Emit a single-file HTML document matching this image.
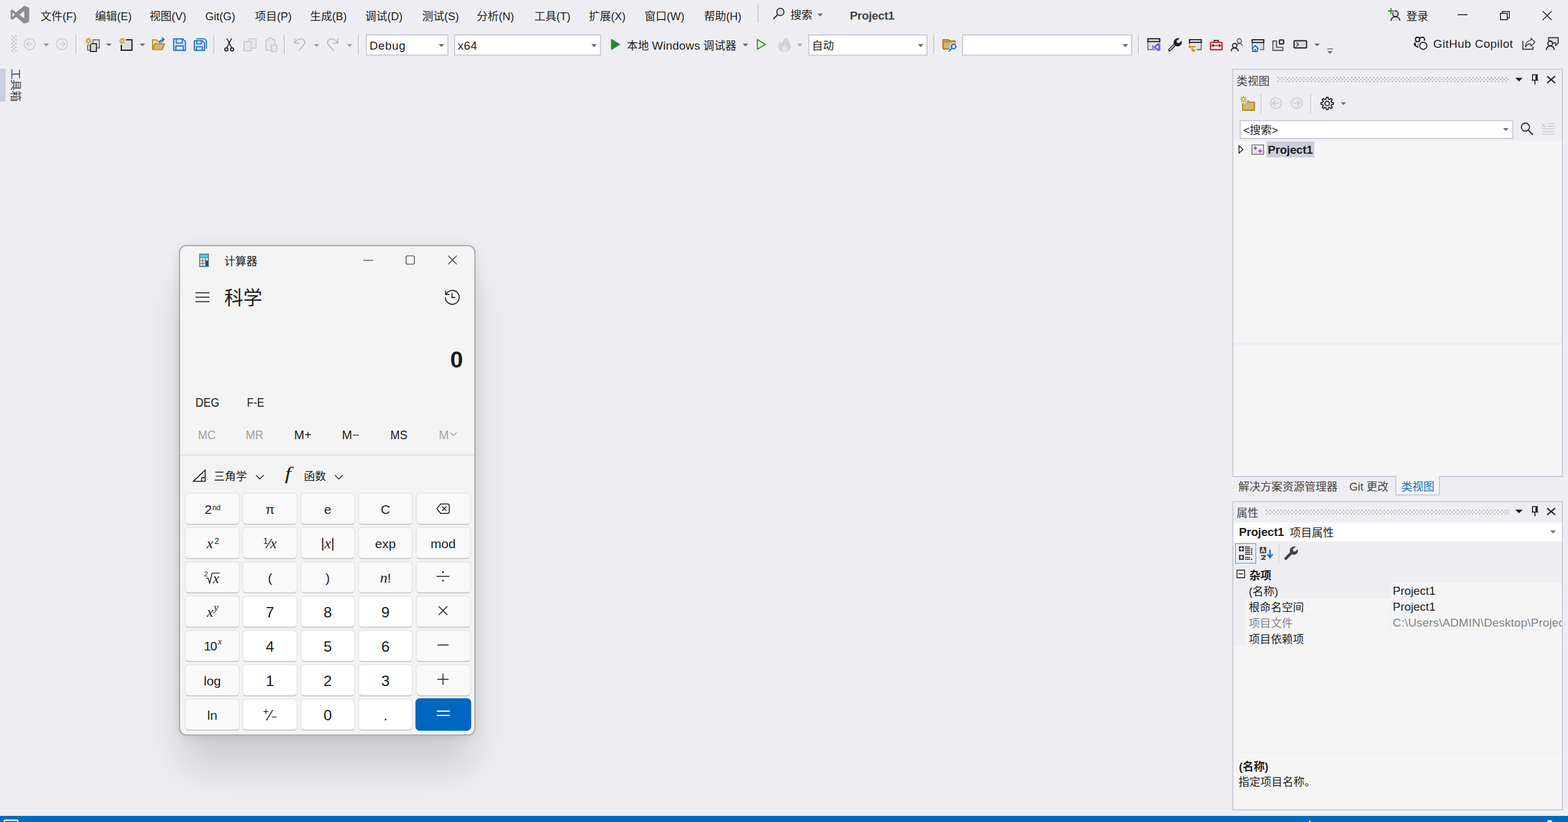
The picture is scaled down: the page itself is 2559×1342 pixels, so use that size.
<!DOCTYPE html>
<html lang="zh-CN">
<head>
<meta charset="utf-8">
<title>Project1 - Microsoft Visual Studio</title>
<style>
html,body{margin:0;padding:0}
body{width:2559px;height:1342px;overflow:hidden;position:relative;background:#EEEEF2;color:#1E1E1E;font-family:"Liberation Sans","Noto Sans CJK SC",sans-serif;font-size:18px}
.a{position:absolute}
.t{position:absolute;white-space:nowrap;line-height:24px;height:24px}
.b{font-weight:bold}
svg{position:absolute;overflow:visible}
/* ---------- VS panels ---------- */
.panel{position:absolute;box-sizing:border-box;border:2px solid #CCCEDB;background:#EEEEF2}
.grip{position:absolute;height:8px;background-image:radial-gradient(circle at 1px 1px,#8E8E93 0.45px,transparent 1.2px),radial-gradient(circle at 4px 4px,#8E8E93 0.45px,transparent 1.2px);background-size:6px 6px}
.combo{position:absolute;box-sizing:border-box;border:2px solid #CCCEDB;background:#fff}
.sep{position:absolute;width:2px;background:#CCCEDB;box-shadow:2px 0 0 #F6F6F8}
/* ---------- Calculator ---------- */
#calc{position:absolute;left:292px;top:400px;width:484px;height:801px;box-sizing:border-box;border:2px solid #ACACAC;border-radius:12px;background:#F3F3F3;box-shadow:0 56px 68px -5px rgba(0,0,0,.145),0 1px 20px -4px rgba(0,0,0,.165);color:#1B1B1B}
#keys{position:absolute;left:301.2px;top:804px;display:grid;grid-template-columns:repeat(5,90.6px);grid-auto-rows:53px;column-gap:3.6px;row-gap:3px}
#keys div{box-sizing:border-box;border:2px solid #E9E9E9;border-bottom-color:#CECECE;border-radius:7px;background:#F9F9F9;display:flex;align-items:center;justify-content:center;font-size:21px;color:#1B1B1B;position:relative;padding-top:2px}
#keys div>svg{position:relative!important;top:-2.6px}
#keys div.n{background:#FFFFFF;font-size:24.5px}
#keys div.eq{background:#0067C0;border-color:#0067C0;color:#fff}
#keys i{font-family:"Liberation Serif",serif;font-style:italic;font-size:24px}
</style>
</head>
<body>

<!-- ======= STATUS BAR ======= -->
<div class="a" style="left:0;top:1332px;width:2559px;height:10px;background:#006CBE"></div>
<div class="a" style="left:6px;top:1338px;width:24px;height:10px;box-sizing:border-box;border:2px solid #fff;border-radius:2px;background:#1A7AC4"></div>
<div class="a" style="left:2136px;top:1340px;width:3px;height:2px;background:#fff;border-radius:1px 1px 0 0"></div>
<div class="a" style="left:2525px;top:1339px;width:8px;height:3px;background:#fff;border-radius:3px 3px 0 0"></div>
<!-- ======= TITLE / MENU BAR ======= -->
<svg style="left:17px;top:9px" width="31" height="30" viewBox="0 0 31 30"><path fill="#8C8C92" fill-rule="evenodd" d="M22.5 0.3L30.6 3.6V26.4L22.5 29.7L9.2 18.6L3.3 23.4L0.4 22V8L3.3 6.6L9.2 11.4Z M22.6 8.7L14.6 15L22.6 21.3Z M3.4 11.2V18.8L7.3 15Z"/></svg>
<div class="t" style="left:66px;top:15px">文件(F)</div>
<div class="t" style="left:155px;top:15px">编辑(E)</div>
<div class="t" style="left:244px;top:15px">视图(V)</div>
<div class="t" style="left:335px;top:15px">Git(G)</div>
<div class="t" style="left:416px;top:15px">项目(P)</div>
<div class="t" style="left:506px;top:15px">生成(B)</div>
<div class="t" style="left:596px;top:15px">调试(D)</div>
<div class="t" style="left:689px;top:15px">测试(S)</div>
<div class="t" style="left:778px;top:15px">分析(N)</div>
<div class="t" style="left:872px;top:15px">工具(T)</div>
<div class="t" style="left:961px;top:15px">扩展(X)</div>
<div class="t" style="left:1052px;top:15px">窗口(W)</div>
<div class="t" style="left:1149px;top:15px">帮助(H)</div>
<div class="a" style="left:1236px;top:7px;width:2px;height:30px;background:#CCCEDB"></div>
<svg style="left:1261px;top:12px" width="20" height="20" viewBox="0 0 20 20"><circle cx="12.5" cy="7.5" r="6" fill="#DCDCDF" stroke="#1E1E1E" stroke-width="1.5"/><path d="M8.2 11.8L1 19" stroke="#1E1E1E" stroke-width="1.8" fill="none"/></svg>
<div class="t" style="left:1290px;top:13px">搜索</div>
<svg style="left:1334px;top:22px" width="9" height="5"><path d="M0 0H9L4.5 5Z" fill="#717171"/></svg>
<div class="t b" style="left:1387px;top:14px;font-size:19px;letter-spacing:-0.3px;color:#444">Project1</div>
<!-- sign-in + window buttons -->
<svg style="left:2264px;top:12px" width="22" height="23" viewBox="0 0 22 23"><circle cx="13.4" cy="10.4" r="4.5" fill="#DCDCDF" stroke="#1E1E1E" stroke-width="1.6"/><path d="M6 22C6.6 17.2 9.6 15.2 13.4 15.2S20.2 17.2 20.8 22" fill="#DCDCDF" stroke="#1E1E1E" stroke-width="1.6"/><path d="M6 0V11.5M0 5.8H11.8" stroke="#EEEEF2" stroke-width="4.5" fill="none"/><path d="M6 1V10.8M1 5.9H11" stroke="#2A962A" stroke-width="2" fill="none"/></svg>
<div class="t" style="left:2295px;top:15px">登录</div>
<svg style="left:2379px;top:23px" width="16" height="2"><path d="M0 1H16" stroke="#1E1E1E" stroke-width="1.5"/></svg>
<svg style="left:2448px;top:18px" width="16" height="15" viewBox="0 0 16 15"><rect x="0.75" y="3.75" width="11" height="10.5" fill="none" stroke="#1E1E1E" stroke-width="1.5"/><path d="M3.8 3.5V0.75H15.25V11.5H12" fill="none" stroke="#1E1E1E" stroke-width="1.4"/></svg>
<svg style="left:2517px;top:18px" width="16" height="15" viewBox="0 0 16 15"><path d="M0.6 0.3L15.4 14.7M15.4 0.3L0.6 14.7" stroke="#1E1E1E" stroke-width="1.4" fill="none"/></svg>

<!-- ======= TOOLBAR ======= -->
<div class="a" style="left:19px;top:58px;width:8px;height:28px;background-image:radial-gradient(circle at 1px 1px,#8E8E93 0.45px,transparent 1.2px),radial-gradient(circle at 4px 4px,#8E8E93 0.45px,transparent 1.2px);background-size:6px 6px"></div>
<div class="sep" style="left:123px;top:57px;height:32px"></div>
<div class="sep" style="left:348px;top:57px;height:32px"></div>
<div class="sep" style="left:463px;top:57px;height:32px"></div>
<div class="sep" style="left:584px;top:57px;height:32px"></div>
<div class="sep" style="left:1523px;top:57px;height:32px"></div>
<div class="sep" style="left:1857px;top:57px;height:32px"></div>
<div class="combo" style="left:597px;top:56px;width:135px;height:35px"></div>
<div class="t" style="left:603px;top:62.5px;font-size:19px;letter-spacing:0.65px">Debug</div>
<svg style="left:716px;top:72px" width="9" height="5"><path d="M0 0H9L4.5 5Z" fill="#6A6A6A"/></svg>
<div class="combo" style="left:741px;top:56px;width:240px;height:35px"></div>
<div class="t" style="left:747px;top:62.5px;font-size:19px;letter-spacing:0.5px">x64</div>
<svg style="left:965px;top:72px" width="9" height="5"><path d="M0 0H9L4.5 5Z" fill="#6A6A6A"/></svg>
<svg style="left:997px;top:63px" width="16" height="19"><path d="M0.8 1L14.8 9.5L0.8 18Z" fill="#238B23" stroke="#238B23" stroke-width="1" stroke-linejoin="round"/></svg>
<div class="t" style="left:1023px;top:62.5px"><span>本地</span> <span style="font-size:19px;letter-spacing:0.25px">Windows</span> <span>调试器</span></div>
<svg style="left:1212px;top:71px" width="9" height="5"><path d="M0 0H9L4.5 5Z" fill="#6A6A6A"/></svg>
<svg style="left:1235px;top:63px" width="16" height="19"><path d="M1 1.5L14.2 9.5L1 17.5Z" fill="#DDEBDD" stroke="#2A962A" stroke-width="1.7" stroke-linejoin="round"/></svg>
<svg style="left:1301px;top:71px" width="9" height="5"><path d="M0 0H9L4.5 5Z" fill="#A9A9AE"/></svg>
<div class="combo" style="left:1319px;top:56px;width:195px;height:35px"></div>
<div class="t" style="left:1325px;top:63px">自动</div>
<svg style="left:1498px;top:72px" width="9" height="5"><path d="M0 0H9L4.5 5Z" fill="#6A6A6A"/></svg>
<div class="combo" style="left:1570px;top:56px;width:278px;height:35px"></div>
<svg style="left:1832px;top:72px" width="9" height="5"><path d="M0 0H9L4.5 5Z" fill="#6A6A6A"/></svg>
<div class="t" style="left:2339px;top:60px;font-size:19px;letter-spacing:0.5px">GitHub Copilot</div>
<svg style="left:0;top:50px" width="1330" height="46" viewBox="0 50 1330 46" fill="none">
<!-- nav back / forward (disabled) -->
<g stroke="#C4C4C9" stroke-width="1.3"><circle cx="48.3" cy="72.1" r="8.9"/><path d="M53.5 72.1H43.2M47.6 67.6L43.1 72.1L47.6 76.6"/><circle cx="101.2" cy="72.1" r="8.9"/><path d="M96 72.1H106.3M101.9 67.6L106.4 72.1L101.9 76.6"/></g>
<path d="M71 71H80L75.5 75.5Z" fill="#909095"/>
<!-- new project -->
<g stroke-width="1.5"><rect x="151.5" y="65" width="10.6" height="13.4" fill="#E2E2E5" stroke="#5E5E5E"/><rect x="143" y="73.2" width="9" height="8.6" fill="#E2E2E5" stroke="#5E5E5E"/><rect x="147.6" y="71.4" width="9.8" height="12.6" fill="#DADADD" stroke="#1E1E1E" stroke-width="1.7"/></g>
<circle cx="144.3" cy="66.9" r="6.3" fill="#EEEEF2"/>
<path d="M144.3 61.6V72.2M139 66.9H149.6M140.5 63.1L148.1 70.7M148.1 63.1L140.5 70.7" stroke="#B8860B" stroke-width="1.4"/><circle cx="144.3" cy="66.9" r="1.7" fill="#EEEEF2"/>
<path d="M173 71H182L177.5 75.5Z" fill="#717171"/>
<!-- new item -->
<rect x="198" y="65" width="17.4" height="17" fill="#DCDCDE" stroke="#1E1E1E" stroke-width="2"/>
<circle cx="199.4" cy="66.9" r="6.6" fill="#EEEEF2"/>
<path d="M199.4 61.6V72.2M194.1 66.9H204.7M195.6 63.1L203.2 70.7M203.2 63.1L195.6 70.7" stroke="#B8860B" stroke-width="1.4"/><circle cx="199.4" cy="66.9" r="1.7" fill="#EEEEF2"/>
<path d="M228 71H237L232.5 75.5Z" fill="#717171"/>
<!-- open folder -->
<path d="M249 81V65H255.5L257.5 67.5H263.5V71.5" fill="#E6D5AC" stroke="#B8860B" stroke-width="1.6"/>
<path d="M249 81L252.8 71.5H268.6L264.8 81Z" fill="#D0B47A" stroke="#B8860B" stroke-width="1.6" stroke-linejoin="round"/>
<path d="M260.3 70.5C260.3 66.5 262.5 64.6 267 64.6M264.3 61.2L267.8 64.6L264.3 68" stroke="#1A6FC4" stroke-width="1.9"/>
<!-- save -->
<path d="M283.5 63.6H298.3L302.6 67.9V82.2H283.5Z" fill="#DCE6F2" stroke="#1A73C8" stroke-width="2" stroke-linejoin="round"/>
<path d="M287.6 63.6V70.4H297.6V63.6M287 82.2V75H299V82.2" stroke="#1A73C8" stroke-width="1.8"/>
<!-- save all -->
<path d="M320.5 63.4H333.6L336.8 66.6V79.5" stroke="#1A73C8" stroke-width="1.8"/>
<path d="M317.3 66.6H330.3L333.8 70.1V82.3H317.3Z" fill="#DCE6F2" stroke="#1A73C8" stroke-width="2" stroke-linejoin="round"/>
<path d="M321 66.6V71.6H328.6V66.6M320.6 82.3V76.4H330.4V82.3" stroke="#1A73C8" stroke-width="1.8"/>
<!-- cut -->
<g stroke="#1E1E1E" stroke-width="1.5"><path d="M370.3 62.6L378.3 78.6M377.9 62.6L369.9 78.6"/><circle cx="369.4" cy="80.7" r="2.5" stroke-width="1.8"/><circle cx="378.8" cy="80.7" r="2.5" stroke-width="1.8"/></g>
<!-- copy (disabled) -->
<g stroke="#C4C4C9" stroke-width="1.5" fill="#E8E8EC"><rect x="406" y="63.3" width="11.8" height="15.4"/><rect x="398.2" y="67.8" width="11.8" height="15.2"/></g>
<!-- paste (disabled) -->
<g stroke="#C4C4C9" stroke-width="1.5" fill="#E8E8EC"><path d="M443 82H433.8V65H437.5C438 62.5 439.5 61.6 441.2 61.6S444.4 62.5 444.9 65H448.6V73"/><rect x="442.8" y="73.8" width="8.8" height="10.4"/></g>
<!-- undo / redo (disabled) -->
<g stroke="#B2B2B7" stroke-width="1.5"><path d="M480.7 62.8V70.4H488.3M481.2 69.9C484.5 64 491.5 61.3 495.6 65.2C500 69.5 496 74 487 82.8"/><path d="M551.3 62.8V70.4H543.7M550.8 69.9C547.5 64 540.5 61.3 536.4 65.2C532 69.5 536 74 545 82.8"/></g>
<path d="M512 72H521L516.5 76.5Z" fill="#9C9CA1"/><path d="M566 72H575L570.5 76.5Z" fill="#9C9CA1"/>
<!-- fire (disabled) -->
<path d="M1284.2 61.4C1285 66.5 1290.6 69.5 1290.6 75.8C1290.6 81.2 1286.2 84.8 1280.4 84.8C1274.4 84.8 1270 81 1270 75.4C1270 71.8 1272 69.3 1273.8 67.2C1274.2 69.6 1275.2 70.8 1276.8 71.4C1276.6 66.6 1279.6 63.2 1284.2 61.4Z" fill="#D0D0D5"/>
<path d="M1280.6 72C1281.5 75 1285 76.5 1285 80C1285 82.5 1283 84 1280.5 84S1276 82.5 1276 80C1276 77 1279.5 75.5 1280.6 72Z" fill="#E4E4E8"/>
</svg>
<svg style="left:1530px;top:50px" width="1029" height="46" viewBox="1530 50 1029 46" fill="none">
<!-- find in files -->
<path d="M1539.2 80V65H1548L1549.8 67H1558.4V72" fill="#CDB47C" stroke="#B07D05" stroke-width="1.9" stroke-linejoin="round"/>
<path d="M1539.2 80V68.4H1547.4L1549.6 67H1558.4V80Z" fill="#CDB47C" stroke="#B07D05" stroke-width="1.9" stroke-linejoin="round"/>
<circle cx="1556.3" cy="75.9" r="6" fill="#EEEEF2"/><path d="M1553 79.2L1548 84.3" stroke="#EEEEF2" stroke-width="4"/>
<circle cx="1556.3" cy="75.9" r="3.7" fill="#DDE6EE" stroke="#0667B9" stroke-width="1.9"/><path d="M1553.4 78.8L1548.2 84.2" stroke="#0667B9" stroke-width="1.9"/>
<!-- window + VS logo -->
<rect x="1873.4" y="63.4" width="19.2" height="17.6" fill="#E0E0E4" stroke="#5A5A5A" stroke-width="1.5"/>
<rect x="1873.4" y="63.4" width="19.2" height="4.3" fill="#F7F7F7" stroke="#1E1E1E" stroke-width="1.9"/>
<g transform="translate(1880 70)"><path d="M10 -1L14.8 1V12.8L10 14.8L3.6 9.2L1.4 11L-1 10V3.8L1.4 2.8L3.6 4.6Z" fill="#EEEEF2"/><path fill="#8661D9" fill-rule="evenodd" d="M10 0L13.7 1.6V12.2L10 13.8L3.6 8.2L1.2 10.2L0 9.6V4.2L1.2 3.6L3.6 5.6Z M10.2 4.2L6.2 6.9L10.2 9.6Z M1.4 5.6V8.2L2.8 6.9Z"/></g>
<!-- wrench -->
<path d="M1908.6 81.6L1918.6 71.6" stroke="#1E1E1E" stroke-width="4.4" stroke-linecap="round"/><path d="M1908.8 81.4L1918.4 71.8" stroke="#E6E6EA" stroke-width="1.5" stroke-linecap="round"/>
<path d="M1925.2 62.8C1922.6 61.8 1919.4 62.4 1917.4 64.4C1914.6 67.2 1914.8 71.4 1917.4 73.8C1920 76.4 1924.2 76.4 1926.8 73.8C1928.8 71.8 1929.2 69 1928.2 66.6L1924.2 70.4L1920.8 69.8L1920.4 66.6Z" fill="#1E1E1E"/>
<!-- window + branch arrows -->
<rect x="1941.3" y="64.8" width="19.2" height="16.2" fill="#E0E0E4" stroke="#5A5A5A" stroke-width="1.5"/>
<rect x="1941.3" y="64.8" width="19.2" height="4.3" fill="#F7F7F7" stroke="#1E1E1E" stroke-width="1.9"/>
<path d="M1938 72.5H1952.5V86H1938Z" fill="#EEEEF2"/>
<path d="M1942 76.2H1949.4M1945.6 76.2V82.6H1948" stroke="#B8860B" stroke-width="1.8"/><path d="M1939.4 76.2L1943 73.2V79.2Z M1951 82.6L1947.6 79.8V85.4Z M1948.2 76.2L1950 74.4L1951.8 76.2L1950 78Z" fill="#B8860B"/>
<!-- toolbox -->
<path d="M1981.6 69V66.2H1988.4V69" stroke="#1E1E1E" stroke-width="1.7"/>
<rect x="1975.5" y="69.1" width="19" height="12.2" rx="0.8" fill="#F0DDE1" stroke="#C50F1F" stroke-width="1.9"/>
<path d="M1975.5 74.4H1994.5" stroke="#C50F1F" stroke-width="1.4"/><path d="M1979.7 72.2V76.6M1990.3 72.2V76.6" stroke="#1E1E1E" stroke-width="1.9"/>
<!-- people -->
<circle cx="2022.6" cy="66.7" r="3.5" fill="#E0E0E4" stroke="#555" stroke-width="1.5"/><path d="M2019 73C2020 71.6 2021.2 71 2022.6 71C2025.4 71 2027.2 72.8 2027.8 75.2" stroke="#555" stroke-width="1.5"/>
<circle cx="2015" cy="74.4" r="3.6" fill="#E4E4E7" stroke="#1E1E1E" stroke-width="1.7"/><path d="M2009 83.6C2009.6 79.8 2012 78.4 2015 78.4S2020.4 79.8 2021 83.6" fill="#DEDEE2" stroke="#1E1E1E" stroke-width="1.7"/>
<!-- window + home -->
<rect x="2043.6" y="65" width="18.8" height="16" fill="#E0E0E4" stroke="#5A5A5A" stroke-width="1.5"/>
<rect x="2043.6" y="65" width="18.8" height="4.3" fill="#F7F7F7" stroke="#1E1E1E" stroke-width="1.9"/>
<path d="M2040.5 80L2048.4 72.2L2056.3 80V86.5H2040.5Z" fill="#EEEEF2"/>
<path d="M2042.8 79.6L2048.4 74.5L2054 79.6" stroke="#0A6CC7" stroke-width="1.9" stroke-linejoin="round"/><path d="M2044.6 79V84.2H2052.2V79" fill="#fff" stroke="#0A6CC7" stroke-width="1.8"/><path d="M2047.4 84V80.6H2049.4V84" stroke="#0A6CC7" stroke-width="1.2"/>
<!-- L-shape -->
<path d="M2077.4 66.9H2083.4V77.2H2093.6V82.4H2077.4Z" fill="#E0E0E4" stroke="#4A4A4A" stroke-width="1.6"/>
<rect x="2088" y="65.3" width="7" height="6.5" rx="0.8" fill="#DADADE" stroke="#1E1E1E" stroke-width="1.9"/>
<!-- terminal -->
<rect x="2111.9" y="66.5" width="20.5" height="11.8" rx="1" fill="#DADADE" stroke="#1E1E1E" stroke-width="1.9"/><path d="M2115.6 69.2L2119.2 72.4L2115.6 75.6" stroke="#3A3A3A" stroke-width="1.4"/>
<path d="M2145 71H2154L2149.5 75.5Z" fill="#717171"/>
<path d="M2166 79.8H2175.2" stroke="#717171" stroke-width="1.5"/><path d="M2166 83.5H2175.2L2170.6 88Z" fill="#717171"/>
<!-- copilot -->
<g stroke="#1A1A1A" stroke-width="2"><rect x="2310.2" y="60.8" width="6.6" height="7.4" rx="3.1"/><path d="M2316.9 63.8C2317.6 61.6 2319.4 60.8 2321.2 60.8C2324.2 60.8 2325.2 62.8 2324.9 66.6"/></g>
<path d="M2310 68.6C2308 70 2307.3 71.6 2307.4 73.6C2309 76 2311.8 77.2 2315 78L2315.2 75.8C2313.2 75.4 2311.8 74.8 2310.9 73.8Z" fill="#1A1A1A"/><path d="M2314.3 71.2V73.8" stroke="#1A1A1A" stroke-width="0.9"/>
<circle cx="2322.8" cy="74.7" r="7.6" fill="#FAFAFC"/><circle cx="2322.8" cy="74.7" r="5.9" fill="#fff" stroke="#1A1A1A" stroke-width="1.7"/>
<!-- share -->
<path d="M2485.3 66.8V80.4H2501.8V76" stroke="#333" stroke-width="1.7"/>
<path d="M2498.5 62.2L2504.8 68.7L2498.5 75.6V71.8C2494.6 71.4 2491.4 73.2 2489.4 76.8C2489.6 70.4 2493.2 66.2 2498.5 65.6Z" fill="#F2F2F5" stroke="#333" stroke-width="1.4" stroke-linejoin="round"/>
<!-- feedback -->
<path d="M2527.4 67V61.5H2543V70.6L2538.6 74.4V70H2534.5" fill="#E0E0E4" stroke="#444" stroke-width="1.9" stroke-linejoin="round"/>
<circle cx="2530" cy="70.9" r="3.9" fill="#DEDEE1" stroke="#1E1E1E" stroke-width="1.8"/><path d="M2523.4 81.6C2524 76.8 2527 75.1 2530 75.1S2536.2 76.8 2536.8 81.6" fill="#DEDEE1" stroke="#1E1E1E" stroke-width="1.8"/>
</svg>


<!-- ======= LEFT AUTO-HIDE TAB ======= -->
<div class="a" style="left:0;top:112px;width:9px;height:54px;background:#CCCEDB"></div>
<div class="t" style="left:33.5px;top:111.5px;transform-origin:0 0;transform:rotate(90deg);color:#444;line-height:18px;height:18px">工具箱</div>

<!-- ======= PANEL 1 : Class View ======= -->
<div class="panel" style="left:2011px;top:112px;width:540px;height:667px"></div>
<div class="a" style="left:2013px;top:230px;width:536px;height:547px;background:#F5F5F5"></div>
<div class="a" style="left:2013px;top:559px;width:536px;height:4px;background:#EEEEF2"></div>
<div class="t" style="left:2018px;top:120.5px;color:#444">类视图</div>
<div class="grip" style="left:2085px;top:126px;width:378px"></div>
<svg style="left:2473px;top:127px" width="12" height="6"><path d="M0 0H12L6 6Z" fill="#1E1E1E"/></svg>
<svg style="left:2499px;top:121px" width="12" height="18" viewBox="0 0 12 18"><path d="M2.2 1H9.8V10H2.2Z M0.5 10H11.5 M6 10V17" fill="none" stroke="#1E1E1E" stroke-width="1.6"/><path d="M6.8 1.5H9.5V9.5H6.8Z" fill="#1E1E1E"/></svg>
<svg style="left:2524px;top:124px" width="15" height="12" viewBox="0 0 15 12"><path d="M1 0.5L14 11.5M14 0.5L1 11.5" stroke="#1E1E1E" stroke-width="2.2" fill="none"/></svg>
<!-- toolbar -->
<div class="sep" style="left:2057px;top:153px;height:32px"></div>
<div class="sep" style="left:2138px;top:153px;height:32px"></div>
<svg style="left:2013px;top:148px" width="200" height="44" viewBox="2013 148 200 44" fill="none">
<path d="M2027.9 180V166.9H2033.5L2035 165.2H2038.2L2038.8 166.9H2047.3V180Z" fill="#CDB47C" stroke="#B8860B" stroke-width="1.8" stroke-linejoin="round"/>
<circle cx="2029.4" cy="162.4" r="6.4" fill="#EEEEF2"/>
<path d="M2029.4 157V167.8M2024 162.4H2034.8M2025.6 158.6L2033.2 166.2M2033.2 158.6L2025.6 166.2" stroke="#B8860B" stroke-width="1.4"/><circle cx="2029.4" cy="162.4" r="1.8" fill="#EEEEF2"/>
<g stroke="#C6C6CB" stroke-width="1.3"><circle cx="2082.3" cy="168.3" r="9" fill="#E9E9ED"/><path d="M2087.4 168.3H2077.3M2081.6 163.9L2077.2 168.3L2081.6 172.7"/><circle cx="2116.2" cy="168.3" r="9" fill="#E9E9ED"/><path d="M2111.1 168.3H2121.2M2116.9 163.9L2121.3 168.3L2116.9 172.7"/></g>
<path d="M2164.2 161.7L2164.6 158.8L2167.4 158.8L2167.8 161.7L2169.8 162.6L2172.1 160.7L2174.2 162.8L2172.3 165.1L2173.2 167.1L2176.1 167.5L2176.1 170.3L2173.2 170.7L2172.3 172.7L2174.2 175.0L2172.1 177.1L2169.8 175.2L2167.8 176.1L2167.4 179.0L2164.6 179.0L2164.2 176.1L2162.2 175.2L2159.9 177.1L2157.8 175.0L2159.7 172.7L2158.8 170.7L2155.9 170.3L2155.9 167.5L2158.8 167.1L2159.7 165.1L2157.8 162.8L2159.9 160.7L2162.2 162.6Z" fill="#E9E9ED" stroke="#1E1E1E" stroke-width="1.7" stroke-linejoin="round"/><circle cx="2166" cy="168.9" r="3.6" fill="#F5F5F8" stroke="#1E1E1E" stroke-width="1.7"/>
<path d="M2188 167H2197L2192.5 171.5Z" fill="#717171"/>
</svg>
<svg style="left:2480px;top:196px" width="70" height="34" viewBox="2480 196 70 34" fill="none">
<circle cx="2489.5" cy="207.5" r="6.6" stroke="#1E1E1E" stroke-width="1.6"/><path d="M2494.2 212.4L2501.6 220" stroke="#1E1E1E" stroke-width="1.8"/>
<g stroke="#C6C6CB" stroke-width="1.3"><path d="M2516.5 202L2522.5 208M2522.5 202L2516.5 208M2525.5 201.6H2537M2525.5 206H2537M2516.5 210.4H2537M2516.5 214.8H2537M2516.5 219.2H2537"/></g>
</svg>
<!-- search row -->
<div class="combo" style="left:2023px;top:196px;width:447px;height:31px"></div>
<div class="t" style="left:2029px;top:200.5px">&lt;搜索&gt;</div>
<svg style="left:2453px;top:209px" width="9" height="5"><path d="M0 0H9L4.5 5Z" fill="#717171"/></svg>
<!-- tree -->
<div class="a" style="left:2067px;top:231px;width:78px;height:26px;background:#CCCEDB"></div>
<div class="t b" style="left:2069px;top:232.5px;font-size:19px;letter-spacing:-0.2px">Project1</div>
<svg style="left:2021px;top:237px" width="9" height="14" viewBox="0 0 9 14"><path d="M1 1L7.5 7L1 13Z" fill="none" stroke="#1E1E1E" stroke-width="1.4"/></svg>
<svg style="left:2042px;top:235px" width="22" height="19" viewBox="2042 235 22 19" fill="none"><defs><linearGradient id="gti" x1="0" y1="0" x2="0" y2="1"><stop offset="0" stop-color="#F8F8F8"/><stop offset="1" stop-color="#D8D8DC"/></linearGradient></defs><rect x="2043.2" y="236.6" width="19" height="15.4" fill="url(#gti)" stroke="#6A6A6A" stroke-width="1.3"/><path d="M2048.6 238.6V244.6M2045.6 241.6H2051.6M2056.6 243.6V249.6M2053.6 246.6H2059.6" stroke="#A33CC0" stroke-width="1.7"/></svg>
<!-- tabs -->
<div class="a" style="left:2277px;top:777px;width:73px;height:32px;box-sizing:border-box;border:2px solid #CCCEDB;border-top:none;background:#F5F5F5"></div>
<div class="t" style="left:2021px;top:782.5px;color:#444">解决方案资源管理器</div>
<div class="t" style="left:2202px;top:782.5px;color:#444">Git 更改</div>
<div class="t" style="left:2287px;top:782.5px;color:#0E70C0">类视图</div>

<!-- ======= PANEL 2 : Properties ======= -->
<div class="panel" style="left:2011px;top:818px;width:540px;height:505px"></div>
<div class="t" style="left:2018px;top:825.5px;color:#444">属性</div>
<div class="grip" style="left:2066px;top:832px;width:397px"></div>
<svg style="left:2473px;top:832px" width="12" height="6"><path d="M0 0H12L6 6Z" fill="#1E1E1E"/></svg>
<svg style="left:2499px;top:826px" width="12" height="18" viewBox="0 0 12 18"><path d="M2.2 1H9.8V10H2.2Z M0.5 10H11.5 M6 10V17" fill="none" stroke="#1E1E1E" stroke-width="1.6"/><path d="M6.8 1.5H9.5V9.5H6.8Z" fill="#1E1E1E"/></svg>
<svg style="left:2524px;top:829px" width="15" height="12" viewBox="0 0 15 12"><path d="M1 0.5L14 11.5M14 0.5L1 11.5" stroke="#1E1E1E" stroke-width="2.2" fill="none"/></svg>
<!-- object combo -->
<div class="a" style="left:2013px;top:853px;width:536px;height:31px;background:#fff"></div>
<div class="t b" style="left:2022px;top:856.5px;font-size:19px;letter-spacing:-0.2px">Project1</div>
<div class="t" style="left:2105px;top:857.5px">项目属性</div>
<svg style="left:2530px;top:866px" width="9" height="5"><path d="M0 0H9L4.5 5Z" fill="#717171"/></svg>
<!-- toolbar -->
<div class="a" style="left:2016px;top:887px;width:34px;height:33px;box-sizing:border-box;border:1.5px solid #3399FF;background:#EEEEF2"></div>
<div class="a" style="left:2087px;top:888px;width:1px;height:32px;background:#CCCEDB"></div>
<svg style="left:2013px;top:886px" width="120" height="36" viewBox="2013 886 120 36" fill="none">
<g fill="#383838"><rect x="2022" y="892" width="8" height="8"/><rect x="2022" y="906" width="8" height="8"/><rect x="2032" y="892.2" width="8" height="1.6"/><rect x="2032" y="895.2" width="8" height="1.6"/><rect x="2032" y="898.2" width="8" height="1.6"/><rect x="2032" y="901.2" width="8" height="1.6"/><rect x="2032" y="904.2" width="8" height="1.6"/><rect x="2032" y="909.2" width="8" height="1.6"/><rect x="2032" y="912.2" width="8" height="1.6"/><rect x="2041.1" y="895.2" width="3" height="1.6"/><rect x="2041.1" y="898.2" width="3" height="1.6"/><rect x="2041.1" y="901.2" width="3" height="1.6"/><rect x="2041.1" y="904.2" width="3" height="1.6"/><rect x="2041.1" y="912.2" width="3" height="1.6"/></g>
<path d="M2026 893.6V898.4M2023.6 896H2028.4M2026 907.6V912.4M2023.6 910H2028.4" stroke="#F5F5F5" stroke-width="1.9"/>
<rect x="2056" y="893" width="10.5" height="10.2" fill="#4A4A4A"/><path d="M2058.4 901.6L2061.25 894.8L2064.1 901.6M2059.5 899.4H2063" stroke="#F2F2F2" stroke-width="1.5"/>
<path d="M2058 907.2H2065V908L2059.4 913H2065.4" stroke="#4A4A4A" stroke-width="1.9"/>
<path d="M2072.7 897.2V909" stroke="#0A6BD0" stroke-width="2.4"/><path d="M2068.4 904.6L2072.7 910.4L2077 904.6" stroke="#0A6BD0" stroke-width="2.2"/>
<path d="M2098.4 911.8L2108 902.2" stroke="#424242" stroke-width="4.6" stroke-linecap="round"/>
<path d="M2114.8 892.8C2112.2 891.8 2109 892.4 2107 894.4C2104.2 897.2 2104.4 901.4 2107 903.8C2109.6 906.4 2113.8 906.4 2116.4 903.8C2118.4 901.8 2118.8 899 2117.8 896.6L2113.8 900.4L2110.4 899.8L2110 896.6Z" fill="#424242"/>
</svg>
<!-- grid -->
<div class="a" style="left:2013px;top:951px;width:536px;height:370px;background:#F5F5F5"></div>
<div class="a" style="left:2013px;top:951px;width:20px;height:104px;background:#EEEEF2"></div>
<div class="a" style="left:2033px;top:951px;width:236px;height:26px;background:#EEEEF2"></div>
<div class="a" style="left:2033px;top:976px;width:516px;height:1px;background:#EEEEF2"></div>
<div class="a" style="left:2033px;top:1002px;width:516px;height:1px;background:#EEEEF2"></div>
<div class="a" style="left:2033px;top:1028px;width:516px;height:1px;background:#EEEEF2"></div>
<div class="a" style="left:2033px;top:1054px;width:516px;height:1px;background:#EEEEF2"></div>
<div class="a" style="left:2269px;top:951px;width:1px;height:104px;background:#EEEEF2"></div>
<svg style="left:2018px;top:930px" width="14" height="14" viewBox="0 0 14 14"><path d="M0.75 0.75H13.25V13.25H0.75Z M3.5 7H10.5" fill="none" stroke="#1E1E1E" stroke-width="1.3"/></svg>
<div class="t b" style="left:2039px;top:927.5px">杂项</div>
<div class="t" style="left:2038px;top:953.5px">(名称)</div>
<div class="t" style="left:2273px;top:952.5px;font-size:19px">Project1</div>
<div class="t" style="left:2038px;top:979.5px">根命名空间</div>
<div class="t" style="left:2273px;top:978.5px;font-size:19px">Project1</div>
<div class="t" style="left:2038px;top:1005.5px;color:#848484">项目文件</div>
<div class="a" style="left:2273px;top:1004.5px;width:276px;height:24px;overflow:hidden"><div class="t" style="left:0;top:0;font-size:19px;letter-spacing:0.2px;color:#848484">C:\Users\ADMIN\Desktop\Project1</div></div>
<div class="t" style="left:2038px;top:1031.5px">项目依赖项</div>
<!-- description -->
<div class="a" style="left:2013px;top:1228px;width:536px;height:1px;background:#EEEEF2"></div>
<div class="t b" style="left:2022px;top:1239.5px">(名称)</div>
<div class="t" style="left:2021px;top:1264.5px">指定项目名称。</div>

<!-- ======= CALCULATOR WINDOW ======= -->
<div id="calc"></div>
<!-- title bar -->
<svg style="left:325px;top:414px" width="16" height="22" viewBox="0 0 16 22"><rect x="0" y="0" width="16" height="22" fill="#6E7B87"/><rect x="1.6" y="1.8" width="12.8" height="4.2" fill="#3FD2FB"/><g fill="#DDE3EC"><rect x="1.6" y="7.2" width="3.4" height="3.6"/><rect x="6" y="7.2" width="3.8" height="3.6"/><rect x="11" y="7.2" width="3.4" height="3.6"/><rect x="1.6" y="12" width="3.4" height="3.4"/><rect x="6" y="12" width="3.8" height="3.4"/><rect x="1.6" y="16.6" width="3.4" height="3.4"/><rect x="6" y="16.6" width="3.8" height="3.4"/></g><rect x="11" y="12" width="3.4" height="8" fill="#0F3F86"/></svg>
<div class="t" style="left:366px;top:414.5px;color:#1B1B1B">计算器</div>
<svg style="left:593px;top:424px" width="16" height="2"><path d="M0 1H16" stroke="#2A2A2A" stroke-width="1.1"/></svg>
<svg style="left:662px;top:417px" width="15" height="15"><rect x="0.7" y="0.7" width="13.6" height="13.6" rx="2.2" fill="none" stroke="#2A2A2A" stroke-width="1.1"/></svg>
<svg style="left:731px;top:417px" width="15" height="15"><path d="M0.5 0.5L14.5 14.5M14.5 0.5L0.5 14.5" stroke="#2A2A2A" stroke-width="1.1" fill="none"/></svg>
<!-- header -->
<svg style="left:319px;top:477px" width="23" height="17"><path d="M0 1H23M0 8.3H23M0 15.6H23" stroke="#1B1B1B" stroke-width="1.5" fill="none"/></svg>
<div class="t" style="left:366px;top:467.5px;font-size:31px;line-height:38px;height:38px;color:#1B1B1B">科学</div>
<svg style="left:725px;top:472px" width="26" height="26" viewBox="0 0 26 26"><path d="M3.2 8.2A11.3 11.3 0 1 1 1.9 13.5" fill="none" stroke="#1B1B1B" stroke-width="1.6"/><path d="M2.2 2.2V8.6H8.6" fill="none" stroke="#1B1B1B" stroke-width="1.6"/><path d="M12.6 6.5V13.6H18" fill="none" stroke="#1B1B1B" stroke-width="1.6"/></svg>
<!-- display -->
<div class="t b" style="left:700px;top:564.5px;width:55.5px;text-align:right;font-size:37.5px;line-height:44px;height:44px;color:#1B1B1B">0</div>
<div class="t" style="left:319px;top:645px;font-size:20px;color:#1B1B1B;transform-origin:0 50%;transform:scaleX(.9)">DEG</div>
<div class="t" style="left:403px;top:645px;font-size:20px;color:#1B1B1B;transform-origin:0 50%;transform:scaleX(.88)">F-E</div>
<div class="t" style="left:323px;top:697.5px;font-size:20px;color:#A2A2A2;transform-origin:0 50%;transform:scaleX(.93)">MC</div>
<div class="t" style="left:401px;top:697.5px;font-size:20px;color:#A2A2A2;transform-origin:0 50%;transform:scaleX(.93)">MR</div>
<div class="t" style="left:480px;top:697.5px;font-size:20px;color:#1B1B1B">M+</div>
<div class="t" style="left:558px;top:697.5px;font-size:20px;color:#1B1B1B">M&#8722;</div>
<div class="t" style="left:637px;top:697.5px;font-size:20px;color:#1B1B1B;transform-origin:0 50%;transform:scaleX(.93)">MS</div>
<div class="t" style="left:716px;top:697.5px;font-size:20px;color:#A2A2A2">M</div>
<svg style="left:734px;top:705px" width="12" height="8"><path d="M0.8 1L6 6.2L11.2 1" fill="none" stroke="#A2A2A2" stroke-width="1.4"/></svg>
<div class="a" style="left:294px;top:742px;width:480px;height:1.5px;background:#E2E2E2"></div>
<!-- trig / function row -->
<svg style="left:314px;top:766px" width="22" height="21" viewBox="0 0 22 21"><path d="M1.5 19.8H20.8V1.5Z" fill="none" stroke="#1B1B1B" stroke-width="1.6" stroke-linejoin="miter"/><path d="M15 19.8V14H20.8" fill="none" stroke="#1B1B1B" stroke-width="1.5"/></svg>
<div class="t" style="left:349px;top:765.5px;color:#1B1B1B">三角学</div>
<svg style="left:417px;top:775px" width="14" height="8"><path d="M0.7 0.7L7 7L13.3 0.7" fill="none" stroke="#1B1B1B" stroke-width="1.4"/></svg>
<div class="t" style="left:466px;top:756px;transform:scaleX(1.25);font-family:'Liberation Serif',serif;font-style:italic;font-size:29px;line-height:34px;height:34px;color:#1B1B1B">f</div>
<div class="t" style="left:496px;top:765.5px;color:#1B1B1B">函数</div>
<svg style="left:546px;top:775px" width="14" height="8"><path d="M0.7 0.7L7 7L13.3 0.7" fill="none" stroke="#1B1B1B" stroke-width="1.4"/></svg>
<!-- keypad -->
<div id="keys">
<div>2<sup style="font-size:12px;position:relative;top:-3px;left:1px">nd</sup></div><div>π</div><div>e</div><div>C</div><div><svg style="top:-1px" width="22" height="17" viewBox="0 0 22 17"><path d="M7.2 0.8H18.5A2.7 2.7 0 0 1 21.2 3.5V13.5A2.7 2.7 0 0 1 18.5 16.2H7.2L0.9 8.5Z" fill="none" stroke="#1B1B1B" stroke-width="1.5" stroke-linejoin="round"/><path d="M9.6 5L16.6 12M16.6 5L9.6 12" stroke="#1B1B1B" stroke-width="1.5" fill="none"/></svg></div>
<div><i>x</i><sup style="font-size:14px;position:relative;top:-5px;left:2px">2</sup></div><div><span style="font-size:14px;position:relative;top:-5px">1</span><span style="font-size:22px">⁄</span><i>x</i></div><div><span style="font-size:22px;font-weight:100;position:relative;top:-1px">|</span><i>x</i><span style="font-size:22px;position:relative;top:-1px">|</span></div><div>exp</div><div>mod</div>
<div><svg style="top:-0.5px" width="27" height="24" viewBox="0 0 27 24"><text x="0" y="9.5" font-family="Liberation Sans" font-size="11.5" fill="#1B1B1B">2</text><path d="M3.6 13.6L6.4 12.6L9.2 21L13.2 4.6H25.6" fill="none" stroke="#1B1B1B" stroke-width="1.4" stroke-linejoin="miter"/><text x="14.6" y="21.4" font-family="Liberation Serif" font-style="italic" font-size="23" fill="#1B1B1B">x</text></svg></div><div>(</div><div>)</div><div><i>n</i>!</div><div><svg width="22" height="18" viewBox="0 0 22 18"><path d="M0.5 9H21.5" stroke="#1B1B1B" stroke-width="1.5"/><circle cx="11" cy="2.2" r="1.4" fill="#1B1B1B"/><circle cx="11" cy="15.8" r="1.4" fill="#1B1B1B"/></svg></div>
<div><i>x</i><i style="font-size:17px;position:relative;top:-8px;left:1px">y</i></div><div class="n">7</div><div class="n">8</div><div class="n">9</div><div><svg width="16" height="16" viewBox="0 0 16 16"><path d="M1 1L15 15M15 1L1 15" stroke="#1B1B1B" stroke-width="1.5" fill="none"/></svg></div>
<div><span style="font-size:20px;letter-spacing:-1px">10</span><i style="font-size:15px;position:relative;top:-8px;left:2px">x</i></div><div class="n">4</div><div class="n">5</div><div class="n">6</div><div><svg width="18" height="2"><path d="M0 1H18" stroke="#1B1B1B" stroke-width="1.5"/></svg></div>
<div>log</div><div class="n">1</div><div class="n">2</div><div class="n">3</div><div><svg width="18" height="18"><path d="M0 9H18M9 0V18" stroke="#1B1B1B" stroke-width="1.5" fill="none"/></svg></div>
<div>ln</div><div class="n"><span style="font-size:16px;position:relative;top:-6px">+</span><span style="font-size:24px">⁄</span><span style="font-size:16px;position:relative;top:3px">&#8722;</span></div><div class="n">0</div><div class="n">.</div><div class="eq"><svg width="21" height="9"><path d="M0 1H21M0 8H21" stroke="#fff" stroke-width="2" fill="none"/></svg></div>
</div>

</body>
</html>
